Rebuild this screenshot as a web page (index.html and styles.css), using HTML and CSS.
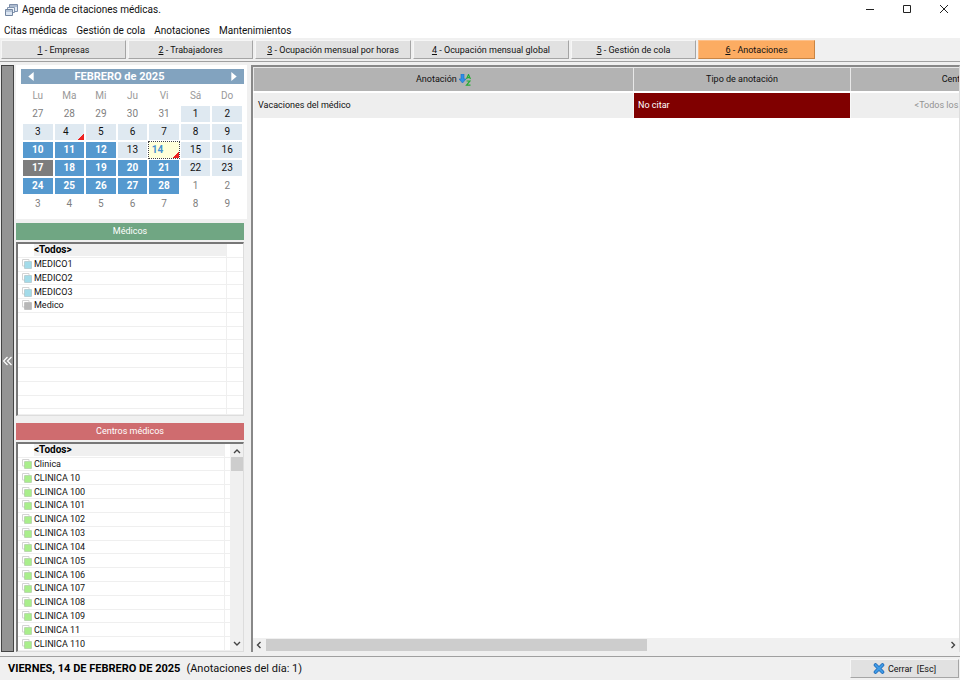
FILE: index.html
```html
<!DOCTYPE html>
<html lang="es">
<head>
<meta charset="utf-8">
<title>Agenda de citaciones médicas.</title>
<link rel="stylesheet" href="styles.css">
</head>
<body>
<svg class="defs" aria-hidden="true">
  <symbol id="sq" viewBox="0 0 10 10"><path d="M.5 7V.5H7V2" fill="none" stroke="#d4d4d4"/><path d="M.5 7h2" stroke="#d4d4d4"/><path d="M2.500 2.500h7v7h-7z" fill="currentColor" stroke="#000" stroke-opacity=".12"/></symbol>
</svg>
<header class="titlebar">
  <svg class="app-icon" viewBox="0 0 13 12"><path d="M4.500.5h8v7h-8z" fill="#dfe8f3" stroke="#7d8fab"/><path d="M4.500 2h8" stroke="#7d8fab"/><path d="M2.500 3.500h7v5h-7z" fill="#eef3f9" stroke="#8295b0"/><path d="M.5 5.500h7v6h-7z" fill="#dce6f2" stroke="#71849f"/><path d="M.5 7h7" stroke="#8da0bb"/></svg>
  <h1>Agenda de citaciones médicas.</h1>
  <button class="win" aria-label="Minimizar"><svg viewBox="0 0 10 10"><path d="M1 5.500h8"/></svg></button>
  <button class="win" aria-label="Maximizar"><svg viewBox="0 0 10 10"><path d="M1.500 1.500h7v7h-7z"/></svg></button>
  <button class="win" aria-label="Cerrar ventana"><svg viewBox="0 0 10 10"><path d="M1 1l8 8M9 1l-8 8"/></svg></button>
</header>
<nav class="menu">
  <a href="#">Citas médicas</a><a href="#">Gestión de cola</a><a href="#">Anotaciones</a><a href="#">Mantenimientos</a>
</nav>
<nav class="tabs">
  <button class="tab"><u>1</u> - Empresas</button>
  <button class="tab"><u>2</u> - Trabajadores</button>
  <button class="tab wide"><u>3</u> - Ocupación mensual por horas</button>
  <button class="tab wide"><u>4</u> - Ocupación mensual global</button>
  <button class="tab"><u>5</u> - Gestión de cola</button>
  <button class="tab active"><u>6</u> - Anotaciones</button>
</nav>
<main class="main">
  <button class="splitter" aria-label="Ocultar panel"><svg viewBox="0 0 9 10"><path d="M4.500 1l-4 4 4 4M8.500 1l-4 4 4 4"/></svg></button>
  <aside class="side">
    <section class="calendar">
      <div class="month">
        <button aria-label="Mes anterior"><svg viewBox="0 0 6 10"><path d="M6 0v10L0 5z"/></svg></button>
        <strong>FEBRERO de 2025</strong>
        <button aria-label="Mes siguiente"><svg viewBox="0 0 6 10"><path d="M0 0v10l6-5z"/></svg></button>
      </div>
      <table class="days">
        <thead><tr><th>Lu</th><th>Ma</th><th>Mi</th><th>Ju</th><th>Vi</th><th>Sá</th><th>Do</th></tr></thead>
        <tbody>
          <tr><td>27</td><td>28</td><td>29</td><td>30</td><td>31</td><td class="in">1</td><td class="in">2</td></tr>
          <tr><td class="in">3</td><td class="in note">4</td><td class="in">5</td><td class="in">6</td><td class="in">7</td><td class="in">8</td><td class="in">9</td></tr>
          <tr><td class="busy">10</td><td class="busy">11</td><td class="busy">12</td><td class="in">13</td><td class="note selected">14</td><td class="in">15</td><td class="in">16</td></tr>
          <tr><td class="busy today">17</td><td class="busy">18</td><td class="busy">19</td><td class="busy">20</td><td class="busy">21</td><td class="in">22</td><td class="in">23</td></tr>
          <tr><td class="busy">24</td><td class="busy">25</td><td class="busy">26</td><td class="busy">27</td><td class="busy">28</td><td>1</td><td>2</td></tr>
          <tr><td>3</td><td>4</td><td>5</td><td>6</td><td>7</td><td>8</td><td>9</td></tr>
        </tbody>
      </table>
    </section>
    <h2 class="bar green">Médicos</h2>
    <div class="list doctors">
      <ul>
        <li class="all"><span></span><b>&lt;Todos&gt;</b></li>
        <li class="blue"><svg><use href="#sq"/></svg><span>MEDICO1</span></li>
        <li class="blue"><svg><use href="#sq"/></svg><span>MEDICO2</span></li>
        <li class="blue"><svg><use href="#sq"/></svg><span>MEDICO3</span></li>
        <li class="gray"><svg><use href="#sq"/></svg><span>Medico</span></li>
        <li></li><li></li><li></li><li></li><li></li><li></li><li></li><li></li>
      </ul>
    </div>
    <h2 class="bar red">Centros médicos</h2>
    <div class="list centers">
      <ul>
        <li class="all"><span></span><b>&lt;Todos&gt;</b></li>
        <li><svg><use href="#sq"/></svg><span>Clinica</span></li>
        <li><svg><use href="#sq"/></svg><span>CLINICA 10</span></li>
        <li><svg><use href="#sq"/></svg><span>CLINICA 100</span></li>
        <li><svg><use href="#sq"/></svg><span>CLINICA 101</span></li>
        <li><svg><use href="#sq"/></svg><span>CLINICA 102</span></li>
        <li><svg><use href="#sq"/></svg><span>CLINICA 103</span></li>
        <li><svg><use href="#sq"/></svg><span>CLINICA 104</span></li>
        <li><svg><use href="#sq"/></svg><span>CLINICA 105</span></li>
        <li><svg><use href="#sq"/></svg><span>CLINICA 106</span></li>
        <li><svg><use href="#sq"/></svg><span>CLINICA 107</span></li>
        <li><svg><use href="#sq"/></svg><span>CLINICA 108</span></li>
        <li><svg><use href="#sq"/></svg><span>CLINICA 109</span></li>
        <li><svg><use href="#sq"/></svg><span>CLINICA 11</span></li>
        <li><svg><use href="#sq"/></svg><span>CLINICA 110</span></li>
      </ul>
      <div class="vscroll">
        <svg viewBox="0 0 8 8"><path d="M1 6l3-3 3 3"/></svg>
        <i class="vthumb"></i>
        <svg viewBox="0 0 8 8"><path d="M1 2l3 3 3-3"/></svg>
      </div>
    </div>
  </aside>
  <section class="content">
    <div class="viewport">
      <table class="notes">
        <colgroup><col class="c1"><col class="c2"><col class="c3"></colgroup>
        <thead><tr>
          <th>Anotación <svg class="sort" viewBox="0 0 12 12"><path d="M2 0h3v5h2L3.500 9 0 5h2z" fill="#2f8fe8" stroke="#1a6bc4" stroke-width=".6"/><path d="M7.500 5L9.500.6 11.500 5M8.200 3.700h2.600" fill="none" stroke="#25ab35" stroke-width="1.200"/><path d="M7.500 7h3.500L7.500 11.200h4" fill="none" stroke="#25ab35" stroke-width="1.200"/></svg></th>
          <th>Tipo de anotación</th>
          <th>Centro</th>
        </tr></thead>
        <tbody><tr>
          <td>Vacaciones del médico</td>
          <td class="no">No citar</td>
          <td class="every">&lt;Todos los centros&gt;</td>
        </tr></tbody>
      </table>
    </div>
    <div class="hscroll">
      <svg viewBox="0 0 8 8"><path d="M5.500 1l-3 3 3 3"/></svg>
      <div class="track"><i class="hthumb"></i></div>
      <svg viewBox="0 0 8 8"><path d="M2.500 1l3 3-3 3"/></svg>
    </div>
  </section>
</main>
<footer class="status">
  <strong>VIERNES, 14 DE FEBRERO DE 2025</strong>
  <span>(Anotaciones del día: 1)</span>
  <button class="close"><svg viewBox="0 0 12 11"><path d="M2.500 2l7 7M9.500 2l-7 7" fill="none" stroke="#1d67b5" stroke-width="3.600" stroke-linecap="round"/><path d="M2.500 2l7 7M9.500 2l-7 7" fill="none" stroke="#409be6" stroke-width="2.200" stroke-linecap="round"/></svg>Cerrar&nbsp; [Esc]</button>
</footer>
</body>
</html>
```
FILE: styles.css
```css
* { box-sizing: border-box; }
body {
  margin: 0;
  height: 100vh;
  display: flex;
  flex-direction: column;
  overflow: hidden;
  background: #f0f0f0;
  color: #111;
  font: 9px/12px Roboto, sans-serif;
}
button {
  font: inherit;
  color: inherit;
  border: 0;
  padding: 0;
  background: none;
}
h1, h2 { margin: 0; font-size: inherit; font-weight: normal; }
ul { margin: 0; padding: 0; list-style: none; }
svg { flex: none; }
.defs { display: none; }

.titlebar {
  display: flex;
  align-items: center;
  height: 20px;
  padding-left: 5px;
  background: #fff;
}
.titlebar h1 { flex: 1; padding-left: 4px; font-size: 10px; line-height: 16px; }
.app-icon { width: 13px; height: 12px; }
.win { width: 37px; height: 20px; padding-left: 4px; }
.win svg { width: 10px; height: 10px; fill: none; stroke: #222; }

.menu {
  display: flex;
  gap: 9px;
  height: 18px;
  padding-left: 4px;
  background: #fff;
  font-size: 10px;
  line-height: 21px;
}
.menu a { color: inherit; text-decoration: none; }

.tabs {
  display: flex;
  gap: 2px;
  height: 24px;
  padding: 2px 1px;
  border-bottom: 1px solid #a0a0a0;
}
.tab {
  width: 125px;
  height: 19px;
  background: #e1e1e1;
  border: 1px solid;
  border-color: #f6f6f6 #a5a5a5 #a5a5a5 #f6f6f6;
}
.tab.wide { width: 156px; }
.tab.active {
  width: 117px;
  background: #fcac62;
  border-color: #fdc08a #c98443 #c98443 #fdc08a;
}

.main {
  flex: 1;
  min-height: 0;
  display: flex;
  padding: 3px 0 4px 1px;
}
.splitter {
  width: 13px;
  padding-top: 8px;
  background: #949494;
  border: 1px solid #444;
}
.splitter svg { width: 9px; height: 10px; fill: none; stroke: #fff; stroke-width: 1.2; }

.side {
  width: 231px;
  margin-left: 2px;
  display: flex;
  flex-direction: column;
}
.calendar { background: #fff; padding: 4px 3px 5px 5px; font-size: 10px; }
.month {
  display: flex;
  align-items: center;
  height: 15px;
  padding: 0 7px;
  background: #82a3bf;
  color: #fff;
  font-size: 11px;
}
.month strong { flex: 1; padding-right: 26px; text-align: center; }
.month button { display: flex; }
.month svg { width: 6px; height: 9px; fill: #fff; }
.days {
  width: 100%;
  table-layout: fixed;
  border-spacing: 2px;
  text-align: center;
  color: #808080;
}
.days th { height: 18px; padding: 2px 0 0; font-weight: normal; color: #999; }
.days td { height: 16px; padding: 0; }
.days .in { background-color: #dfe9f1; color: #111; }
.days .busy { background: #5599cf; color: #fff; font-weight: bold; }
.days .today { background: #7d7d7d; }
.days .note {
  padding-right: 7px;
  background-image: linear-gradient(135deg, transparent 50%, #ee2222 50%);
  background-size: 6px 6px;
  background-position: right bottom;
  background-repeat: no-repeat;
}
.days .selected {
  padding-right: 13px;
  background-color: #ffffd9;
  outline: 1px dotted #444;
  color: #4490d0;
  font-weight: bold;
}

.bar {
  height: 17px;
  margin: 4px 3px 2px 0;
  color: #fff;
  line-height: 17px;
  text-align: center;
}
.green { background: #70a683; }
.red { background: #cf6c6f; margin-top: 7px; }

.list {
  display: flex;
  margin-right: 3px;
  background: #fff;
  border: 1px solid #ddd;
  border-top: 2px solid #777;
  border-left: 2px solid #777;
}
.list ul { flex: 1; display: grid; }
.doctors { flex: 174; min-height: 0; }
.doctors ul { grid-template-rows: repeat(12, 5fr) 2fr; }
.centers { flex: 211; min-height: 0; }
.centers ul { grid-template-rows: repeat(15, 1fr); }
.list li {
  display: flex;
  align-items: center;
  min-height: 0;
  padding-left: 4px;
  border-bottom: 1px solid #efefef;
  color: #a9ee8c;
}
.list li::after { content: ""; width: 16px; height: 100%; margin-left: auto; border-left: 1px solid #efefef; }
.centers li::after { width: 5px; }
.list .blue { color: #a3dbe9; }
.list .gray { color: #b8b8b8; }
.list li svg { width: 10px; height: 10px; }
.list li span { padding-left: 2px; color: #111; }
.list li.all span { width: 12px; }
.list b { flex: 1; background: #f0f0f0; color: #000; font-size: 10px; }

.vscroll {
  width: 13px;
  display: flex;
  flex-direction: column;
  align-items: center;
  padding: 3px 0;
  background: #f0f0f0;
}
.vscroll svg, .hscroll svg { width: 8px; height: 8px; fill: none; stroke: #444; stroke-width: 1.4; }
.vthumb { width: 12px; height: 14px; margin-top: 2px; background: #cdcdcd; }
.vscroll svg:last-child { margin-top: auto; }

.content {
  flex: 1;
  min-width: 0;
  margin-left: 4px;
  display: flex;
  flex-direction: column;
  background: #fff;
  border-top: 2px solid #888;
  border-left: 2px solid #888;
  border-right: 1px solid #ddd;
}
.viewport { flex: 1; overflow: hidden; }
.notes { table-layout: fixed; width: 807px; border-collapse: collapse; }
.c1 { width: 380px; }
.c2 { width: 217px; }
.notes th {
  height: 24px;
  padding: 0;
  background: #b3b3b3;
  border: 1px solid #e8e8e8;
  border-bottom: 2px solid #fff;
  font-weight: normal;
}
.notes td {
  height: 26px;
  padding: 0 4px;
  background: #eee;
  border: 1px solid #f8f8f8;
  border-width: 0 1px;
}
.notes .no { background: #800000; color: #fff; }
.notes .every { color: #929292; text-align: center; }
.sort { width: 12px; height: 12px; vertical-align: middle; }
.hscroll {
  display: flex;
  align-items: center;
  gap: 3px;
  height: 14px;
  padding: 0 2px;
  background: #f0f0f0;
}
.track { flex: 1; }
.hthumb { display: block; width: 56%; height: 12px; background: #cdcdcd; }

.status {
  display: flex;
  align-items: center;
  height: 24px;
  padding: 2px 1px 2px 8px;
  border-top: 1px solid #a0a0a0;
  font-size: 11px;
}
.status strong { color: #000; }
.status span { padding-left: 6px; }
.close {
  display: flex;
  align-items: center;
  justify-content: center;
  gap: 3px;
  width: 109px;
  height: 19px;
  margin-left: auto;
  background: #e1e1e1;
  border: 1px solid;
  border-color: #f6f6f6 #a5a5a5 #a5a5a5 #f6f6f6;
  font-size: 9px;
}
.close svg { width: 12px; height: 11px; }
```
